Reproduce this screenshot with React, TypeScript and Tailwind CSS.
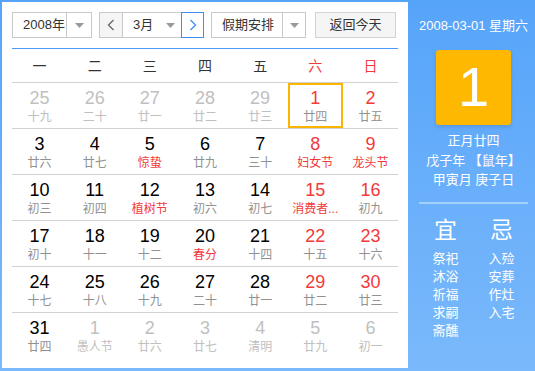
import React from 'react';

type Day = { n: number; l: string; other?: boolean; fest?: boolean; sel?: boolean };

const rows: Day[][] = [
    [
        { n: 25, l: '十九', other: true },
        { n: 26, l: '二十', other: true },
        { n: 27, l: '廿一', other: true },
        { n: 28, l: '廿二', other: true },
        { n: 29, l: '廿三', other: true },
        { n: 1, l: '廿四', sel: true },
        { n: 2, l: '廿五' },
    ],
    [
        { n: 3, l: '廿六' },
        { n: 4, l: '廿七' },
        { n: 5, l: '惊蛰', fest: true },
        { n: 6, l: '廿九' },
        { n: 7, l: '三十' },
        { n: 8, l: '妇女节', fest: true },
        { n: 9, l: '龙头节', fest: true },
    ],
    [
        { n: 10, l: '初三' },
        { n: 11, l: '初四' },
        { n: 12, l: '植树节', fest: true },
        { n: 13, l: '初六' },
        { n: 14, l: '初七' },
        { n: 15, l: '消费者...', fest: true },
        { n: 16, l: '初九' },
    ],
    [
        { n: 17, l: '初十' },
        { n: 18, l: '十一' },
        { n: 19, l: '十二' },
        { n: 20, l: '春分', fest: true },
        { n: 21, l: '十四' },
        { n: 22, l: '十五' },
        { n: 23, l: '十六' },
    ],
    [
        { n: 24, l: '十七' },
        { n: 25, l: '十八' },
        { n: 26, l: '十九' },
        { n: 27, l: '二十' },
        { n: 28, l: '廿一' },
        { n: 29, l: '廿二' },
        { n: 30, l: '廿三' },
    ],
    [
        { n: 31, l: '廿四' },
        { n: 1, l: '愚人节', other: true },
        { n: 2, l: '廿六', other: true },
        { n: 3, l: '廿七', other: true },
        { n: 4, l: '清明', other: true },
        { n: 5, l: '廿九', other: true },
        { n: 6, l: '初一', other: true },
    ],
];

const weekdays = ['一', '二', '三', '四', '五', '六', '日'];
const yi = ['祭祀', '沐浴', '祈福', '求嗣', '斋醮'];
const ji = ['入殓', '安葬', '作灶', '入宅'];

function Caret() {
    return (
        <svg width="9" height="5" viewBox="0 0 9 5">
            <path d="M0 0h9L4.5 5z" fill="#999" />
        </svg>
    );
}

function Chevron({ dir, color }: { dir: 'l' | 'r'; color: string }) {
    return (
        <svg width="8" height="12" viewBox="0 0 8 12">
            <path
                d={dir === 'l' ? 'M6.5 1L1.5 6l5 5' : 'M1.5 1l5 5-5 5'}
                fill="none"
                stroke={color}
                strokeWidth="1.3"
            />
        </svg>
    );
}

export default function App() {
    return (
        <div
            className="w-[535px] h-[371px] flex bg-gradient-to-b from-[#56a4fa] to-[#7ab9fb] text-[#333] overflow-hidden"
            style={{ fontFamily: '"Liberation Sans", "Noto Sans CJK SC", sans-serif' }}
        >
            {/* calendar */}
            <div className="w-[406px] h-[366px] mt-[2px] ml-[2px] bg-white pt-[10px] px-[10px]">
                <div className="flex h-[26px] text-[13px] whitespace-nowrap">
                    <div className="w-[80px] flex border border-[#c9c9c9]">
                        <div className="flex-1 flex items-center pl-[10px]">2008年</div>
                        <div className="w-[25px] flex items-center justify-center border-l border-[#c9c9c9]">
                            <Caret />
                        </div>
                    </div>
                    <div className="ml-[7px] w-[105px] flex">
                        <div className="w-[24px] flex items-center justify-center border border-[#c9c9c9] bg-[#f5f5f5]">
                            <Chevron dir="l" color="#666" />
                        </div>
                        <div className="flex-1 flex items-center pl-[10px] pr-[6px] border-y border-[#c9c9c9]">
                            <span className="flex-1">3月</span>
                            <Caret />
                        </div>
                        <div className="w-[23px] flex items-center justify-center border border-[#3d8ef5]">
                            <Chevron dir="r" color="#3d8ef5" />
                        </div>
                    </div>
                    <div className="ml-[7px] w-[95px] flex border border-[#c9c9c9]">
                        <div className="flex-1 flex items-center pl-[10px]">假期安排</div>
                        <div className="w-[23px] flex items-center justify-center border-l border-[#c9c9c9]">
                            <Caret />
                        </div>
                    </div>
                    <div className="ml-[9px] w-[81px] flex items-center justify-center border border-[#d3d3d3] bg-[#f5f5f5]">
                        返回今天
                    </div>
                </div>

                <div className="mt-[10px] h-[1px] bg-[#4a9cf6]" />

                <div className="grid grid-cols-7 h-[34px] border-b border-[#d2d2d2] text-[14px] items-center pt-[2px]">
                    {weekdays.map((w, i) => (
                        <div key={w} className={'text-center ' + (i >= 5 ? 'text-[#f23a3a]' : 'text-[#333]')}>
                            {w}
                        </div>
                    ))}
                </div>

                {rows.map((row, ri) => (
                    <div
                        key={ri}
                        className={'grid grid-cols-7 h-[46px] ' + (ri < rows.length - 1 ? 'border-b border-[#d2d2d2]' : '')}
                    >
                        {row.map((d, ci) => {
                            const weekend = ci >= 5;
                            const numColor = d.other ? 'text-[#c0c0c0]' : weekend ? 'text-[#f23a3a]' : 'text-black';
                            const lunColor = d.other ? 'text-[#c0c0c0]' : d.fest ? 'text-[#f23a3a]' : 'text-[#919191]';
                            return (
                                <div
                                    key={ci}
                                    className={
                                        'flex flex-col items-center ' +
                                        (d.sel ? 'border-2 border-[#fbb400] pt-[3px]' : 'pt-[5px]')
                                    }
                                >
                                    <div className={'text-[18px] leading-[20px] ' + numColor}>{d.n}</div>
                                    <div className={'mt-[1px] text-[12px] leading-[16px] whitespace-nowrap ' + lunColor}>
                                        {d.l}
                                    </div>
                                </div>
                            );
                        })}
                    </div>
                ))}
            </div>

            {/* side panel */}
            <div className="flex-1 flex flex-col items-center pl-[4px] text-white text-[13px]">
                <div className="mt-[17px] leading-[18px] whitespace-nowrap">2008-03-01 星期六</div>
                <div className="mt-[15px] w-[75px] h-[75px] rounded-[3px] bg-[#ffb800] shadow-[0_2px_4px_rgba(0,0,0,0.12)] flex items-center justify-center text-[56px] leading-none pb-[2px]">
                    1
                </div>
                <div className="mt-[6px] leading-[19.5px] text-center whitespace-nowrap">
                    <div>正月廿四</div>
                    <div>戊子年 【鼠年】</div>
                    <div>甲寅月 庚子日</div>
                </div>
                <div className="mt-[12px] w-[109px] h-[2px] bg-white/40" />
                <div className="mt-[13px] flex gap-[12px]">
                    <div className="w-[44px] flex flex-col items-center">
                        <div className="text-[23px] leading-[26px]">宜</div>
                        <div className="mt-[7px] leading-[18px] text-center">
                            {yi.map((t) => (
                                <div key={t}>{t}</div>
                            ))}
                        </div>
                    </div>
                    <div className="w-[44px] flex flex-col items-center">
                        <div className="text-[23px] leading-[26px]">忌</div>
                        <div className="mt-[7px] leading-[18px] text-center">
                            {ji.map((t) => (
                                <div key={t}>{t}</div>
                            ))}
                        </div>
                    </div>
                </div>
            </div>
        </div>
    );
}
